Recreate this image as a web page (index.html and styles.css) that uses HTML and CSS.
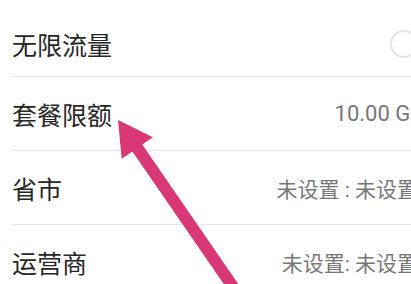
FILE: index.html
```html
<!DOCTYPE html>
<html lang="zh-CN">
<head>
<meta charset="utf-8">
<title>流量设置</title>
<link rel="stylesheet" href="styles.css">
</head>
<body>
<div class="screen">
  <ul class="settings">
    <li class="row row-first">
      <span class="label">无限流量</span>
      <span class="switch" aria-label="off"></span>
    </li>
    <li class="row">
      <span class="label">套餐限额</span>
      <span class="value value-num">10.00 GB</span>
    </li>
    <li class="row">
      <span class="label">省市</span>
      <span class="value">未设置 : 未设置</span>
    </li>
    <li class="row">
      <span class="label">运营商</span>
      <span class="value">未设置: 未设置</span>
    </li>
  </ul>
  <svg class="arrow" width="411" height="284" viewBox="0 0 411 284" aria-hidden="true">
    <polygon points="118,120 152.9,137.2 142.2,144.6 247.6,297.6 237.8,304.4 132.4,151.4 121.7,158.8" fill="#d93775"/>
  </svg>
</div>
</body>
</html>
```

FILE: styles.css
```css
html, body {
  margin: 0;
  padding: 0;
  background: #ffffff;
}

body {
  width: 411px;
  height: 284px;
  overflow: hidden;
  font-family: Roboto, "Noto Sans CJK SC", "Noto Sans", sans-serif;
}

.screen {
  position: relative;
  width: 411px;
  height: 284px;
  overflow: hidden;
}

.settings {
  list-style: none;
  margin: 0;
  padding: 0 0 0 12px;
  width: 406px;
}

.row {
  display: flex;
  align-items: center;
  height: 73px;
  border-bottom: 1px solid #e6e6e6;
}

.row-first {
  height: 64px;
  padding-top: 12px;
}

.label {
  font-family: "Noto Sans CJK SC", sans-serif;
  font-size: 25px;
  color: #262626;
  white-space: nowrap;
}

.value {
  margin-left: auto;
  font-size: 21px;
  color: #777777;
  white-space: nowrap;
}

.value-num {
  font-size: 22px;
  margin-right: -6px;
}

.switch {
  margin-left: auto;
  width: 24px;
  height: 24px;
  border: 2px solid #e4e4e4;
  border-radius: 50%;
  background: #ffffff;
  flex: none;
}

.arrow {
  position: absolute;
  left: 0;
  top: 0;
  pointer-events: none;
}
```
